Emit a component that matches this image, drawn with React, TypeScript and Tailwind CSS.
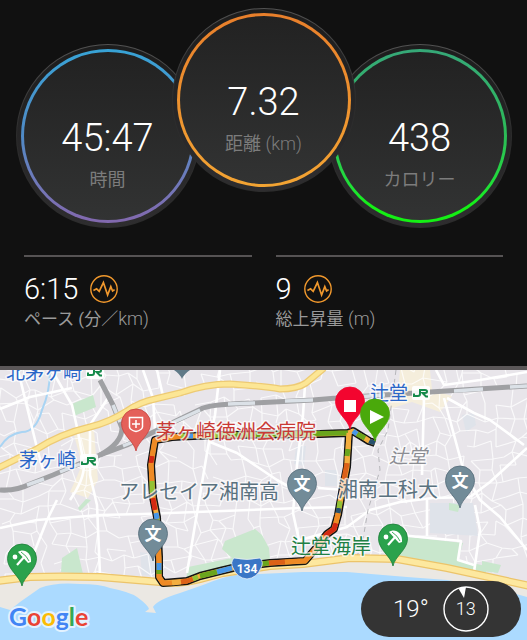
import { clsx } from "clsx";

const appFont = "font-[Roboto,'Noto_Sans_CJK_JP',sans-serif]";

function Ring({ value, label, unit, ring, className }: any) {
  return (
    <div
      className={clsx(
        "size-46 shrink-0 rounded-full bg-linear-to-b from-[#525252] via-[#2c2c2c] to-[#2c2c2c] p-px",
        className
      )}
    >
      <div className="size-full rounded-full bg-linear-to-b from-[#1d1d1d] to-[#2e2d2f] p-1">
        <div className={clsx("size-full rounded-full bg-linear-to-b p-[3px]", ring)}>
          <div className="flex size-full flex-col items-center gap-2 rounded-full bg-linear-to-b from-[#222222] to-[#323333] pt-16">
            <dd className="text-[38px] leading-11 font-light text-white">{value}</dd>
            <dt className="order-last text-lg leading-6 text-[#7c7c7c]">
              {label}
              {unit && <span className="font-light"> {unit}</span>}
            </dt>
          </div>
        </div>
      </div>
    </div>
  );
}

function PulseIcon() {
  return (
    <svg viewBox="0 0 28 28" className="size-7" fill="none" stroke="#f0982d" aria-hidden="true">
      <circle cx="14" cy="14" r="13.2" strokeWidth="1.4" />
      <path d="M3.4 15.5 6.6 13.8 9.2 16.3 13.4 7.6 17.6 20 20.8 11.6 22.6 16 24.6 14.6" strokeWidth="1.7" />
    </svg>
  );
}

function Stat({ value, label, unit }: any) {
  return (
    <div className="border-t-2 border-[#565354] pt-4">
      <dd className="flex items-center gap-3 text-[29px] leading-8 font-light text-white">
        {value}
        <PulseIcon />
      </dd>
      <dt className="text-[17px] leading-7 text-[#9a9a9a]">
        {label}
        <span className="text-lg leading-7 font-light">{unit}</span>
      </dt>
    </div>
  );
}

// small residential streets: a grid with every node pushed a little off its place
function buildLanes() {
  let seed = 11;
  const rnd = () => {
    seed = (seed * 16807) % 2147483647;
    return seed / 2147483647;
  };
  const step = 13;
  const cols = 44;
  const rows = 18;
  const nodes: number[][][] = [];
  for (let r = 0; r < rows; r++) {
    nodes.push([]);
    for (let c = 0; c < cols; c++) {
      nodes[r].push([
        Math.round(c * step - 12 + rnd() * 11 + r * 1.5 - 10),
        Math.round(362 + r * step + rnd() * 11 - c * 0.4),
      ]);
    }
  }
  let d = "";
  for (let r = 0; r < rows - 1; r++) {
    for (let c = 0; c < cols - 1; c++) {
      const [x, y] = nodes[r][c];
      if (rnd() > 0.25) d += `M${x} ${y}L${nodes[r][c + 1].join(" ")}`;
      if (rnd() > 0.25) d += `M${x} ${y}L${nodes[r + 1][c].join(" ")}`;
    }
  }
  return d;
}

const lanes = buildLanes();

const streets = [
  "M18 370 37 448 43 470",
  "M52 370 Q66 395 72 405 L78 432 84 465 Q84 480 70 500",
  "M90 425V475L97 505 100 575",
  "M110 395 90 425",
  "M143 370 153 398 155 430",
  "M157 370 163 396",
  "M0 409 30 397 72 388",
  "M220 370 215 415 208 447 187 573",
  "M210 442 237 453 277 480 293 489",
  "M305 385 303 415 297 465 293 513 300 545",
  "M0 528 37 520 100 515 143 514 300 508 347 507",
  "M57 500 47 520 30 563 24 577",
  "M424 398 422 475",
  "M444 398 464 472 480 500 500 517 527 550",
  "M447 398 474 413 490 420 524 445",
  "M436 370 444 385 480 380 527 372",
  "M527 448 490 482 470 497",
  "M300 540 347 527 370 510 400 502 433 498 470 497",
  "M427 500V536",
  "M380 536 410 536 461 541 458 560 474 565",
  "M475 505 480 530 474 572",
  "M318 488 345 490",
];

const northRoad =
  "M-4 469 37 449Q60 434 90 427 110 422 127 411 140 402 155 399L180 393Q205 384 230 384 262 386 280 389 297 389 306 383L324 368";
const coastRoad =
  "M-3 581 30 577Q60 576 100 577L160 582Q175 585 200 579L223 573 270 566 303 564 350 558 397 559 447 568 530 586";

const route =
  "M375 443 369 441 353 431 348 433 320 434 220 435 193 436 172 437 155 440 151 465 153 497 157 517 159 557 159 577 163 583 187 581 200 576 220 571 237 567 270 563 305 561 317 547 327 534 334 529 338 515 343 487 347 467 349 433";

const green = "#6aa51d";
const lime = "#93c234";
const orange = "#ee8a25";
const dark = "#dc6118";
const amber = "#f3ae3f";
const red = "#d32a12";
const blue = "#4797e8";
const navy = "#26506e";

const routeParts: [string, string][] = [
  ["M375 443 369 441", navy],
  ["M369 441 365 438", amber],
  ["M365 438 357 434", green],
  ["M357 434 353 431", blue],
  ["M348 433 220 435", green],
  ["M220 435 205 436", lime],
  ["M193 436 188 436", blue],
  ["M188 436 181 436", lime],
  ["M181 436 155 440 152 456", orange],
  ["M152 456 151 463", red],
  ["M151 463 152 481", orange],
  ["M152 481 152 493", lime],
  ["M152 493 153 498", orange],
  ["M153 498 155 510", red],
  ["M156 513 157 519", blue],
  ["M157 519 158 530", lime],
  ["M158 545 159 563", orange],
  ["M159 563 159 570", blue],
  ["M159 570 159 574", green],
  ["M159 574 159 577 163 583 172 583", orange],
  ["M172 583 181 582", amber],
  ["M181 582 187 581 193 579", dark],
  ["M193 579 198 577", lime],
  ["M200 576 217 572", green],
  ["M217 572 232 568", blue],
  ["M260 564 269 563", green],
  ["M269 563 285 562", dark],
  ["M285 562 300 561", orange],
  ["M300 561 305 561 317 547 325 536", orange],
  ["M325 536 327 534 334 529 336 523", red],
  ["M336 523 338 513", orange],
  ["M338 513 339 508", navy],
  ["M339 508 340 501", lime],
  ["M340 501 342 492", amber],
  ["M342 492 344 479", orange],
  ["M344 479 347 463", dark],
  ["M347 463 347 456", amber],
  ["M347 456 348 449", green],
  ["M348 449 349 433", amber],
];

const pinShape =
  "M0 0C-2-10-14.5-16-14.5-27.5A14.5 14.5 0 0 1 14.5-27.5C14.5-16 2-10 0 0Z";

function Pin({ x, y, fill, stroke, children }: any) {
  return (
    <g transform={`translate(${x} ${y})`}>
      <path d={pinShape} fill={fill} stroke={stroke} strokeWidth="0.8" />
      {children}
    </g>
  );
}

function SchoolPin({ x, y }: any) {
  return (
    <Pin x={x} y={y} fill="#728b98" stroke="#546b78">
      <text y="-21" textAnchor="middle" fill="#fff" className="text-[17px] font-bold">
        文
      </text>
    </Pin>
  );
}

function BeachPin({ x, y }: any) {
  return (
    <Pin x={x} y={y} fill="#2ba24c" stroke="#1d7d38">
      <g transform="translate(0 -28)">
        <circle cx="-7" cy="-1" r="2.4" fill="#fff" />
        <path d="M-5 7 3-2" stroke="#fff" strokeWidth="2.2" />
        <path d="M-4-6C1-10 10-6 9 4L6 5Z" fill="#fff" />
        <path d="M-1-6Q5-2 7 3" stroke="#2ba24c" strokeWidth="0.9" fill="none" />
      </g>
    </Pin>
  );
}

function JrMark({ x, y }: any) {
  return (
    <g transform={`translate(${x} ${y})`} fill="none" strokeWidth="2">
      <rect x="-2" y="-3" width="18" height="14" rx="2" fill="#fff" opacity="0.9" />
      <path d="M6 0V5Q6 7 4 7H0V4.5M7 1H11Q13 1 13 2.5T11 4H8.5L12 7.5H14" stroke="#168a4b" />
    </g>
  );
}

function Label({ x, y, fill, className, children }: any) {
  return (
    <text
      x={x}
      y={y}
      fill={fill}
      stroke="#fff"
      strokeOpacity="0.7"
      strokeWidth="3"
      strokeLinejoin="round"
      paintOrder="stroke"
      className={className}
    >
      {children}
    </text>
  );
}

function RouteMap() {
  return (
    <svg viewBox="0 370 527 270" className="block w-full" role="img" aria-label="ルートマップ">
      <rect y="370" width="527" height="270" fill="#e8e5ea" />

      {/* districts and parks */}
      <g fill="#dfe3ea">
        <path d="M140 552 158 555 158 576 142 575Z" />
        <path d="M462 415 474 413 476 425 466 432Z" />
        <path d="M325 470 337 470 337 486 325 486Z" />
        <path d="M296 446 306 446 304 466 294 464Z" />
      </g>
      <g fill="#f5eedc">
        <path d="M74 435 94 430 98 480 88 498 70 492 82 465Z" />
        <path d="M400 370 430 370 432 390 452 396 440 412 412 402 386 410 398 390Z" />
      </g>
      <path d={lanes} fill="none" stroke="#fff" strokeWidth="1.2" opacity="0.75" />
      <path d="M430 503 473 503 478 536 430 533Z" fill="#dfe3ea" />
      <g fill="#c9e7cd">
        <path d="M72 404 93 395 96 407 74 416Z" />
        <path d="M62 558 77 548 83 574 61 572Z" />
        <path d="M78 508 86 499 91 500 80 511Z" />
        <path d="M188 567 232 558 222 549 225 541 240 535 255 529 262 535 269 548 270 560 305 560 240 570 186 580Z" />
        <path d="M400 536 463 543 458 560 486 566 486 576 440 564 400 556Z" />
        <path d="M482 561 501 565 498 573 482 571Z" />
        <path d="M449 503 460 505 458 512 449 510Z" />
      </g>
      <path
        d="M50 370Q50 392 42 410 36 432 22 432 8 434 0 447"
        fill="none"
        stroke="#a9d4f3"
        strokeWidth="2"
      />
      <g fill="none" stroke="#fff" strokeWidth="2.6" strokeLinejoin="round">
        {streets.map((d) => (
          <path key={d} d={d} />
        ))}
      </g>
      <path
        d="M396 370 392 400 388 430 378 450 380 470 368 510 362 545 348 575"
        fill="none"
        stroke="#b6b6ba"
        strokeDasharray="5 4"
      />

      {/* railways */}
      <g fill="none" strokeLinejoin="round">
        <g stroke="#9fa0a3" strokeWidth="5">
          <path d="M0 490Q17 491 30 484L53 475 100 455 127 445 180 419 203 408 Q215 404 253 403L313 400 337 398 430 392 527 386" />
          <path d="M100 380 113 405 122 428Q122 443 100 455" />
        </g>
        <g stroke="#dbe1e7" strokeWidth="3.5">
          <path d="M27 485 44 479M60 472 80 464M123 446 140 439M172 423 200 410M228 404 255 403M285 401 313 400M355 397 385 395M454 391 483 389M510 387 527 386" />
          <path d="M113 405 120 422" />
        </g>
      </g>

      <g fill="none">
        <path d={northRoad} stroke="#edca74" strokeWidth="7" />
        <path d={northRoad} stroke="#fce695" strokeWidth="4.5" />
      </g>

      {/* beach and sea */}
      <path
        d="M0 580 30 577 100 577 160 583 190 582 223 574 270 566 303 564 350 558 397 559 447 568 527 585V640H0Z"
        fill="#ebe8e3"
      />
      <path
        d="M0 607 10 610 20 602 40 588Q55 582 80 584 100 584 110 588 130 592 137 597 148 605 149 609L145 612 156 613 153 607Q157 600 180 593L203 585Q225 576 237 575L303 572 347 572 407 577 447 580 490 587 527 597V640H0Z"
        fill="#abdaff"
      />
      <g fill="none">
        <path d={coastRoad} stroke="#ecc46a" strokeWidth="8" />
        <path d={coastRoad} stroke="#fde89f" strokeWidth="5.5" />
      </g>

      {/* recorded track, coloured by pace */}
      <g fill="none" strokeLinejoin="round">
        <path d={route} stroke="#141414" strokeWidth="8" />
        <path d={route} stroke={amber} strokeWidth="5" />
        {routeParts.map(([d, color]) => (
          <path key={d} d={d} stroke={color} strokeWidth="5" />
        ))}
      </g>

      <path
        d="M234 558Q247 561 260 558 264 562 261 568 257 578 247 579 237 578 233 568 230 562 234 558Z"
        fill="#3a76c6"
        stroke="#e4ecf5"
        strokeWidth="0.8"
      />
      <text x="247" y="573" textAnchor="middle" fill="#fff" className="text-xs font-bold">
        134
      </text>

      <Label x="6" y="379" fill="#2a66c8" className="text-[19px]">北茅ヶ崎</Label>
      <Label x="19" y="467" fill="#2a66c8" className="text-[19px]">茅ヶ崎</Label>
      <Label x="370" y="400" fill="#2a66c8" className="text-[19px]">辻堂</Label>
      <Label x="389" y="463" fill="#8b8d93" className="text-[19px] italic">辻堂</Label>
      <Label x="156" y="439" fill="#c93a35" className="text-[20px]">茅ヶ崎徳洲会病院</Label>
      <Label x="119" y="499" fill="#5a727f" className="text-[20px]">アレセイア湘南高</Label>
      <Label x="338" y="497" fill="#5a727f" className="text-[20px]">湘南工科大</Label>
      <Label x="291" y="554" fill="#208044" className="text-[20px]">辻堂海岸</Label>
      <JrMark x="88" y="368" />
      <JrMark x="82" y="457" />
      <JrMark x="414" y="389" />

      <path d="M174 370H190Q184 374 182 379 180 374 174 370Z" fill="#5f7987" />
      <SchoolPin x="153" y="561" />
      <SchoolPin x="302" y="511" />
      <SchoolPin x="460" y="508" />
      <BeachPin x="22" y="586" />
      <BeachPin x="393" y="566" />
      <Pin x="136" y="451" fill="#e4605a" stroke="#c5433f">
        <path
          d="M-6.5-33.5H6.5V-24Q6-21 0-19.5-6-21-6.5-24ZM0-31V-23M-4-27H4"
          fill="none"
          stroke="#fff"
          strokeWidth="1.5"
        />
      </Pin>
      <Pin x="350" y="429" fill="#f3052f" stroke="#f3052f">
        <path d="M-6-29H6V-17H-6Z" fill="#fff" />
      </Pin>
      <Pin x="375" y="441" fill="#4aa90b" stroke="#4aa90b">
        <path d="M-5-31V-17L9-24Z" fill="#fff" />
      </Pin>

      <text
        x="9"
        y="626"
        stroke="#e3f2ff"
        strokeWidth="4"
        strokeLinejoin="round"
        paintOrder="stroke"
        className="font-[Lato,sans-serif] text-[25px] font-bold"
      >
        <tspan fill="#4285f4">G</tspan>
        <tspan fill="#ea4335">o</tspan>
        <tspan fill="#fbbc05">o</tspan>
        <tspan fill="#4285f4">g</tspan>
        <tspan fill="#34a853">l</tspan>
        <tspan fill="#ea4335">e</tspan>
      </text>
    </svg>
  );
}

function WeatherBadge() {
  return (
    <div className="absolute right-1.5 bottom-[3px] flex h-14 w-40 items-center gap-3.5 rounded-full bg-[#343434] pl-8 font-light text-white">
      <span className="text-2xl">19°</span>
      <span className="relative grid size-11.5 place-items-center text-lg">
        <svg viewBox="0 0 46 46" className="absolute inset-0" aria-hidden="true">
          <circle cx="23" cy="23" r="22" fill="none" stroke="#fff" strokeWidth="1.4" />
          <path d="M15.5 2.5Q19 1 23 1L21 12Z" fill="#fff" />
        </svg>
        13
      </span>
    </div>
  );
}

export default function App() {
  return (
    <main lang="ja" className={clsx("bg-[#111111]", appFont)}>
      <dl className="flex justify-center pt-2">
        <Ring
          value="45:47"
          label="時間"
          ring="from-[#37a3d6] via-[#4f8ac6] to-[#8268ae]"
          className="mt-9"
        />
        <Ring
          value="7.32"
          label="距離"
          unit="(km)"
          ring="from-[#e87f2b] to-[#f3a433]"
          className="z-10 -mx-7"
        />
        <Ring
          value="438"
          label="カロリー"
          ring="from-[#36a878] via-[#2cbb56] via-50% to-[#14f014] to-90%"
          className="mt-9"
        />
      </dl>
      <dl className="grid grid-cols-2 gap-6 px-6 pt-[27px] pb-[33px]">
        <Stat value="6:15" label="ペース (分／" unit="km)" />
        <Stat value="9" label="総上昇量" unit=" (m)" />
      </dl>
      <section className="relative border-t-4 border-[#5b5758]">
        <RouteMap />
        <WeatherBadge />
      </section>
    </main>
  );
}
